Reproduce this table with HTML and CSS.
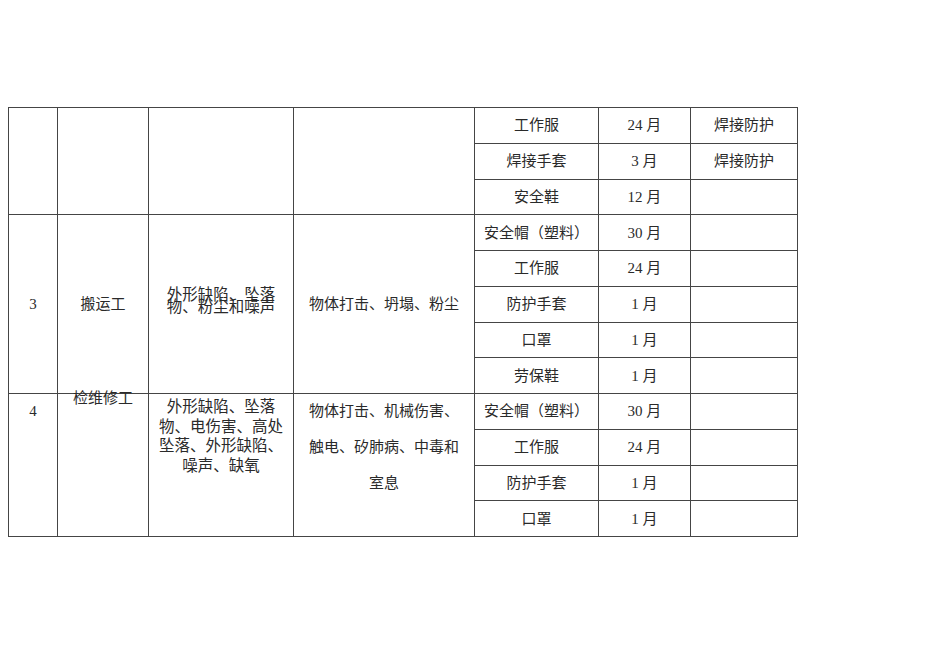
FILE: index.html
```html
<!DOCTYPE html>
<html lang="zh-CN">
<head>
<meta charset="utf-8">
<title>劳动防护用品</title>
<link rel="stylesheet" href="styles.css">
</head>
<body>
<table class="grid">
  <colgroup>
    <col class="c-no"><col class="c-job"><col class="c-risk"><col class="c-harm"><col class="c-item"><col class="c-term"><col class="c-note">
  </colgroup>
  <tbody>
    <tr>
      <td rowspan="3"></td>
      <td rowspan="3"></td>
      <td rowspan="3"></td>
      <td rowspan="3"></td>
      <td class="item">工作服</td>
      <td class="term">24 月</td>
      <td class="note">焊接防护</td>
    </tr>
    <tr>
      <td class="item">焊接手套</td>
      <td class="term">3 月</td>
      <td class="note">焊接防护</td>
    </tr>
    <tr>
      <td class="item">安全鞋</td>
      <td class="term">12 月</td>
      <td class="note"></td>
    </tr>
    <tr>
      <td rowspan="5" class="no mid">3</td>
      <td rowspan="5" class="job mid">搬运工</td>
      <td rowspan="5" class="risk tight">外形缺陷、坠落<br>物、粉尘和噪声</td>
      <td rowspan="5" class="harm mid">物体打击、坍塌、粉尘</td>
      <td class="item">安全帽（塑料）</td>
      <td class="term">30 月</td>
      <td class="note"></td>
    </tr>
    <tr>
      <td class="item">工作服</td>
      <td class="term">24 月</td>
      <td class="note"></td>
    </tr>
    <tr>
      <td class="item">防护手套</td>
      <td class="term">1 月</td>
      <td class="note"></td>
    </tr>
    <tr>
      <td class="item">口罩</td>
      <td class="term">1 月</td>
      <td class="note"></td>
    </tr>
    <tr>
      <td class="item">劳保鞋</td>
      <td class="term">1 月</td>
      <td class="note"></td>
    </tr>
    <tr>
      <td rowspan="4" class="no top">4</td>
      <td rowspan="4" class="job top"><span class="raised">检维修工</span></td>
      <td rowspan="4" class="risk list">外形缺陷、坠落<br>物、电伤害、高处<br>坠落、外形缺陷、<br>噪声、缺氧</td>
      <td rowspan="4" class="harm top">物体打击、机械伤害、<br>触电、矽肺病、中毒和<br>室息</td>
      <td class="item">安全帽（塑料）</td>
      <td class="term">30 月</td>
      <td class="note"></td>
    </tr>
    <tr>
      <td class="item">工作服</td>
      <td class="term">24 月</td>
      <td class="note"></td>
    </tr>
    <tr>
      <td class="item">防护手套</td>
      <td class="term">1 月</td>
      <td class="note"></td>
    </tr>
    <tr>
      <td class="item">口罩</td>
      <td class="term">1 月</td>
      <td class="note"></td>
    </tr>
  </tbody>
</table>
</body>
</html>
```
FILE: styles.css
```css
html, body {
  margin: 0;
  padding: 0;
  background: #ffffff;
}

body {
  padding: 107px 0 0 8px;
  font-family: "Liberation Serif", "Noto Sans CJK SC", serif;
  font-size: 15px;
  color: #2a2a2a;
}

.grid {
  border-collapse: collapse;
  table-layout: fixed;
  width: 789px;
}

.c-no { width: 49px; }
.c-job { width: 91px; }
.c-risk { width: 145px; }
.c-harm { width: 181px; }
.c-item { width: 124px; }
.c-term { width: 92px; }
.c-note { width: 107px; }

.grid td {
  border: 1px solid #454545;
  height: 34.75px;
  padding: 0;
  text-align: center;
  vertical-align: middle;
  line-height: 20px;
  white-space: nowrap;
  overflow: visible;
}

.grid td.mid {
  vertical-align: middle;
}

.grid td.top {
  vertical-align: top;
  line-height: 35.75px;
}

.grid td.tight {
  vertical-align: middle;
  font-size: 15.5px;
  line-height: 12px;
  padding-bottom: 6px;
}

.grid td.list {
  vertical-align: top;
  font-size: 15.5px;
  line-height: 19.5px;
  padding-top: 3px;
}

.raised {
  display: block;
  line-height: 16px;
  margin-top: -4px;
}
```
